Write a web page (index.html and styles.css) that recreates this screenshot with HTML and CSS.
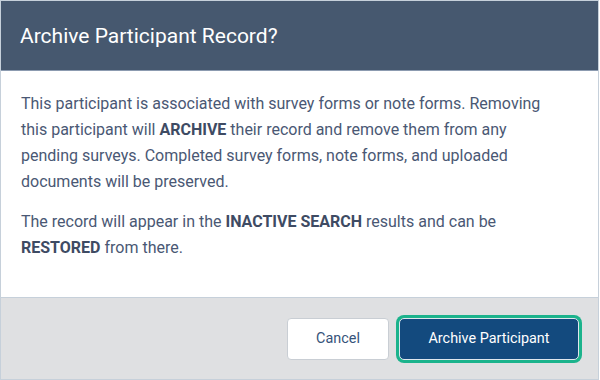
FILE: index.html
```html
<!DOCTYPE html>
<html lang="en">
<head>
  <meta charset="UTF-8" />
  <title>Archive Participant Record?</title>
  <link rel="stylesheet" href="styles.css">
</head>
<body>
  <div class="modal">
    <header class="modal-header">
      <h1>Archive Participant Record?</h1>
    </header>

    <div class="modal-body">
      <p>This participant is associated with survey forms or note forms. Removing this participant will <strong>ARCHIVE</strong> their record and remove them from any pending surveys. Completed survey forms, note forms, and uploaded documents will be preserved.</p>
      <p>The record will appear in the <strong>INACTIVE SEARCH</strong> results and can be <strong>RESTORED</strong> from there.</p>
    </div>

    <footer class="modal-footer">
      <button class="btn btn-cancel">Cancel</button>
      <button class="btn btn-primary">Archive Participant</button>
    </footer>
  </div>
</body>
</html>
```

FILE: styles.css
```css
* {
  margin: 0;
  padding: 0;
  box-sizing: border-box;
}

body {
  font-family: Roboto, "Liberation Sans", sans-serif;
  background: #fff;
  width: 600px;
  height: 380px;
  overflow: hidden;
}

.modal {
  width: 599px;
  height: 380px;
  border: 1px solid #c6d0da;
  display: flex;
  flex-direction: column;
}

.modal-header {
  background: #46586f;
  height: 70px;
  padding: 0 19px;
  display: flex;
  align-items: center;
  border-bottom: 1px solid #8c9bb0;
}

.modal-header h1 {
  color: #fff;
  font-size: 21px;
  font-weight: 400;
}

.modal-body {
  flex: 1;
  padding: 20px 32px 0 20px;
  color: #4a5874;
  font-size: 16px;
  line-height: 26px;
}

.modal-body p {
  margin-bottom: 14px;
}

.modal-body strong {
  font-weight: 700;
  color: #3e4b63;
}

.modal-footer {
  height: 82px;
  background: #dfe0e2;
  border-top: 1px solid #c6d0da;
  display: flex;
  justify-content: flex-end;
  align-items: center;
  gap: 10px;
  padding-right: 19px;
}

.btn {
  font-family: inherit;
  font-size: 14.4px;
  height: 42px;
  border-radius: 4px;
  cursor: pointer;
}

.btn-cancel {
  width: 102px;
  background: #fff;
  color: #36537a;
  border: 1px solid #c9ced4;
}

.btn-primary {
  width: 180px;
  background: #134a7e;
  color: #fff;
  border: 1px solid #dfe7ee;
  box-shadow: 0 0 0 3px #1bb38c;
  border-radius: 5px;
}
```
